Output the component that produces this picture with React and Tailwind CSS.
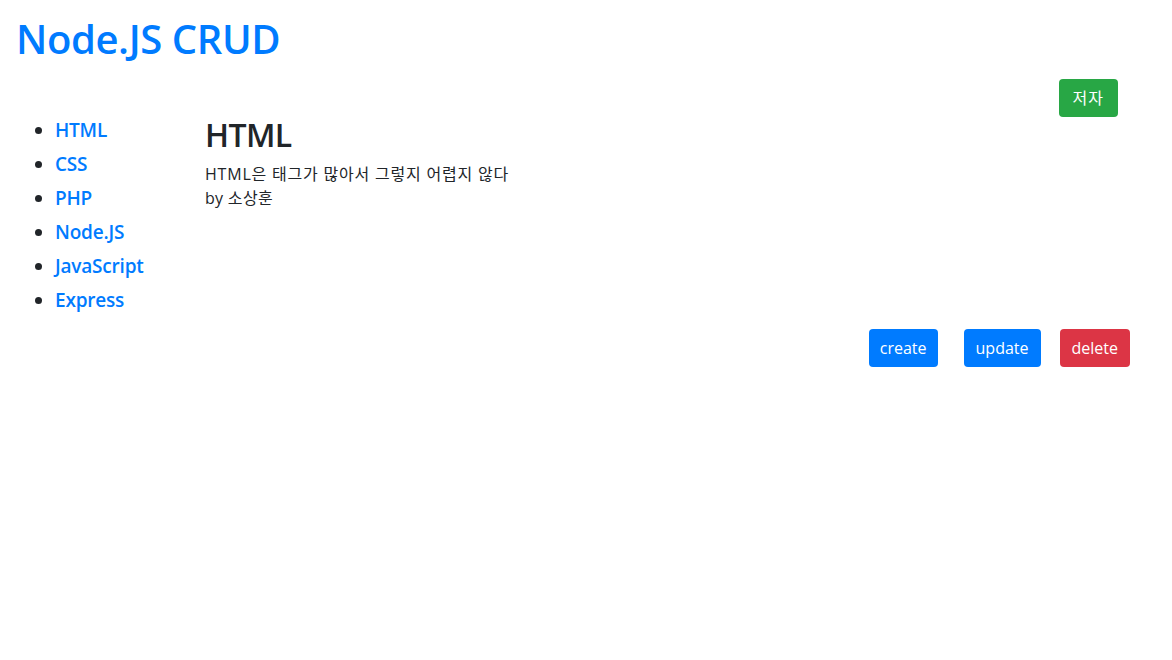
import React from 'react'

const TOPICS = ['HTML', 'CSS', 'PHP', 'Node.JS', 'JavaScript', 'Express']

const App = () => {
  return (
    <div className="min-h-[660px] bg-white text-[#212529] font-['Open_Sans','Noto_Sans_CJK_KR',sans-serif]">
      {/* Title */}
      <h1 className="pt-[15px] pl-[16px] text-[40px] leading-[48px] font-semibold tracking-[-0.4px] text-[#007bff]">
        <a href="#">Node.JS CRUD</a>
      </h1>

      {/* Author button */}
      <div className="flex justify-end pr-[54px] mt-[16px] h-[34px]">
        <button className="h-[38px] px-[14px] rounded-[4px] bg-[#28a745] text-white text-[16px] leading-[24px] tracking-[1px]">
          저자
        </button>
      </div>

      {/* Main */}
      <div className="flex">
        <ul className="list-disc pl-[55px] w-[205px] shrink-0">
          {TOPICS.map((t) => (
            <li key={t} className="h-[34px] text-[19px] leading-[34px] font-semibold tracking-[-0.2px]">
              <a href="#" className="text-[#007bff]">{t}</a>
            </li>
          ))}
        </ul>
        <div className="pt-[3px]">
          <h2 className="text-[32px] leading-[38px] font-semibold tracking-[-0.6px] mb-[8px]">HTML</h2>
          <p className="text-[16px] leading-[24px] tracking-[0.8px]">HTML은 태그가 많아서 그렇지 어렵지 않다</p>
          <p className="text-[16px] leading-[24px] tracking-[0.3px]">by 소상훈</p>
        </div>
      </div>

      {/* Actions */}
      <div className="flex justify-end pr-[42px] mt-[12px]">
        <button className="h-[38px] px-[11px] rounded-[4px] bg-[#007bff] text-white text-[16px] leading-[24px]">
          create
        </button>
        <button className="ml-[26px] h-[38px] px-[12px] rounded-[4px] bg-[#007bff] text-white text-[16px] leading-[24px]">
          update
        </button>
        <button className="ml-[19px] h-[38px] px-[12px] rounded-[4px] bg-[#dc3545] text-white text-[16px] leading-[24px]">
          delete
        </button>
      </div>
    </div>
  )
}

export default App
